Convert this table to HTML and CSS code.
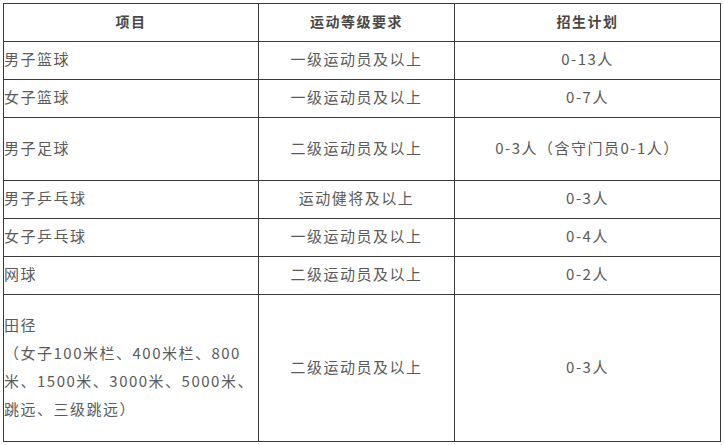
FILE: index.html
```html
<!DOCTYPE html>
<html lang="zh-CN">
<head>
<meta charset="utf-8">
<title>招生项目</title>
<link rel="stylesheet" href="styles.css">
</head>
<body>
<div class="sheet">
  <div class="cell head">项目</div>
  <div class="cell head">运动等级要求</div>
  <div class="cell head">招生计划</div>

  <div class="cell name">男子篮球</div>
  <div class="cell mid">一级运动员及以上</div>
  <div class="cell mid">0-13人</div>

  <div class="cell name">女子篮球</div>
  <div class="cell mid">一级运动员及以上</div>
  <div class="cell mid">0-7人</div>

  <div class="cell name">男子足球</div>
  <div class="cell mid">二级运动员及以上</div>
  <div class="cell mid">0-3人（含守门员0-1人）</div>

  <div class="cell name">男子乒乓球</div>
  <div class="cell mid">运动健将及以上</div>
  <div class="cell mid">0-3人</div>

  <div class="cell name">女子乒乓球</div>
  <div class="cell mid">一级运动员及以上</div>
  <div class="cell mid">0-4人</div>

  <div class="cell name">网球</div>
  <div class="cell mid">二级运动员及以上</div>
  <div class="cell mid">0-2人</div>

  <div class="cell name tall"><p class="multi">田径<br>（女子100米栏、400米栏、800<br>米、1500米、3000米、5000米、<br>跳远、三级跳远）</p></div>
  <div class="cell mid">二级运动员及以上</div>
  <div class="cell mid">0-3人</div>
</div>
</body>
</html>
```

FILE: styles.css
```css
html, body {
  margin: 0;
  padding: 0;
  background: #ffffff;
}

body {
  font-family: "Noto Sans CJK SC", "Noto Sans", sans-serif;
  font-size: 15px;
  letter-spacing: 1.5px;
  color: #5a5a5a;
}

.sheet {
  margin: 3px 0 0 3px;
  width: 718px;
  box-sizing: border-box;
  display: grid;
  grid-template-columns: 255px 196px 266px;
  grid-template-rows: 38px 38px 38px 63px 38px 38px 38px 147px;
  border-top: 1px solid #3a3a3a;
  border-left: 1px solid #3a3a3a;
}

.cell {
  box-sizing: border-box;
  border-right: 1px solid #3a3a3a;
  border-bottom: 1px solid #3a3a3a;
  display: flex;
  align-items: center;
  white-space: nowrap;
  line-height: 20px;
  padding-bottom: 3px;
}

.head {
  justify-content: center;
  font-weight: bold;
  font-size: 14px;
  color: #484848;
}

.mid {
  justify-content: center;
}

.name {
  justify-content: flex-start;
  padding-left: 0;
}

.multi {
  margin: 0;
  line-height: 28px;
}
```
